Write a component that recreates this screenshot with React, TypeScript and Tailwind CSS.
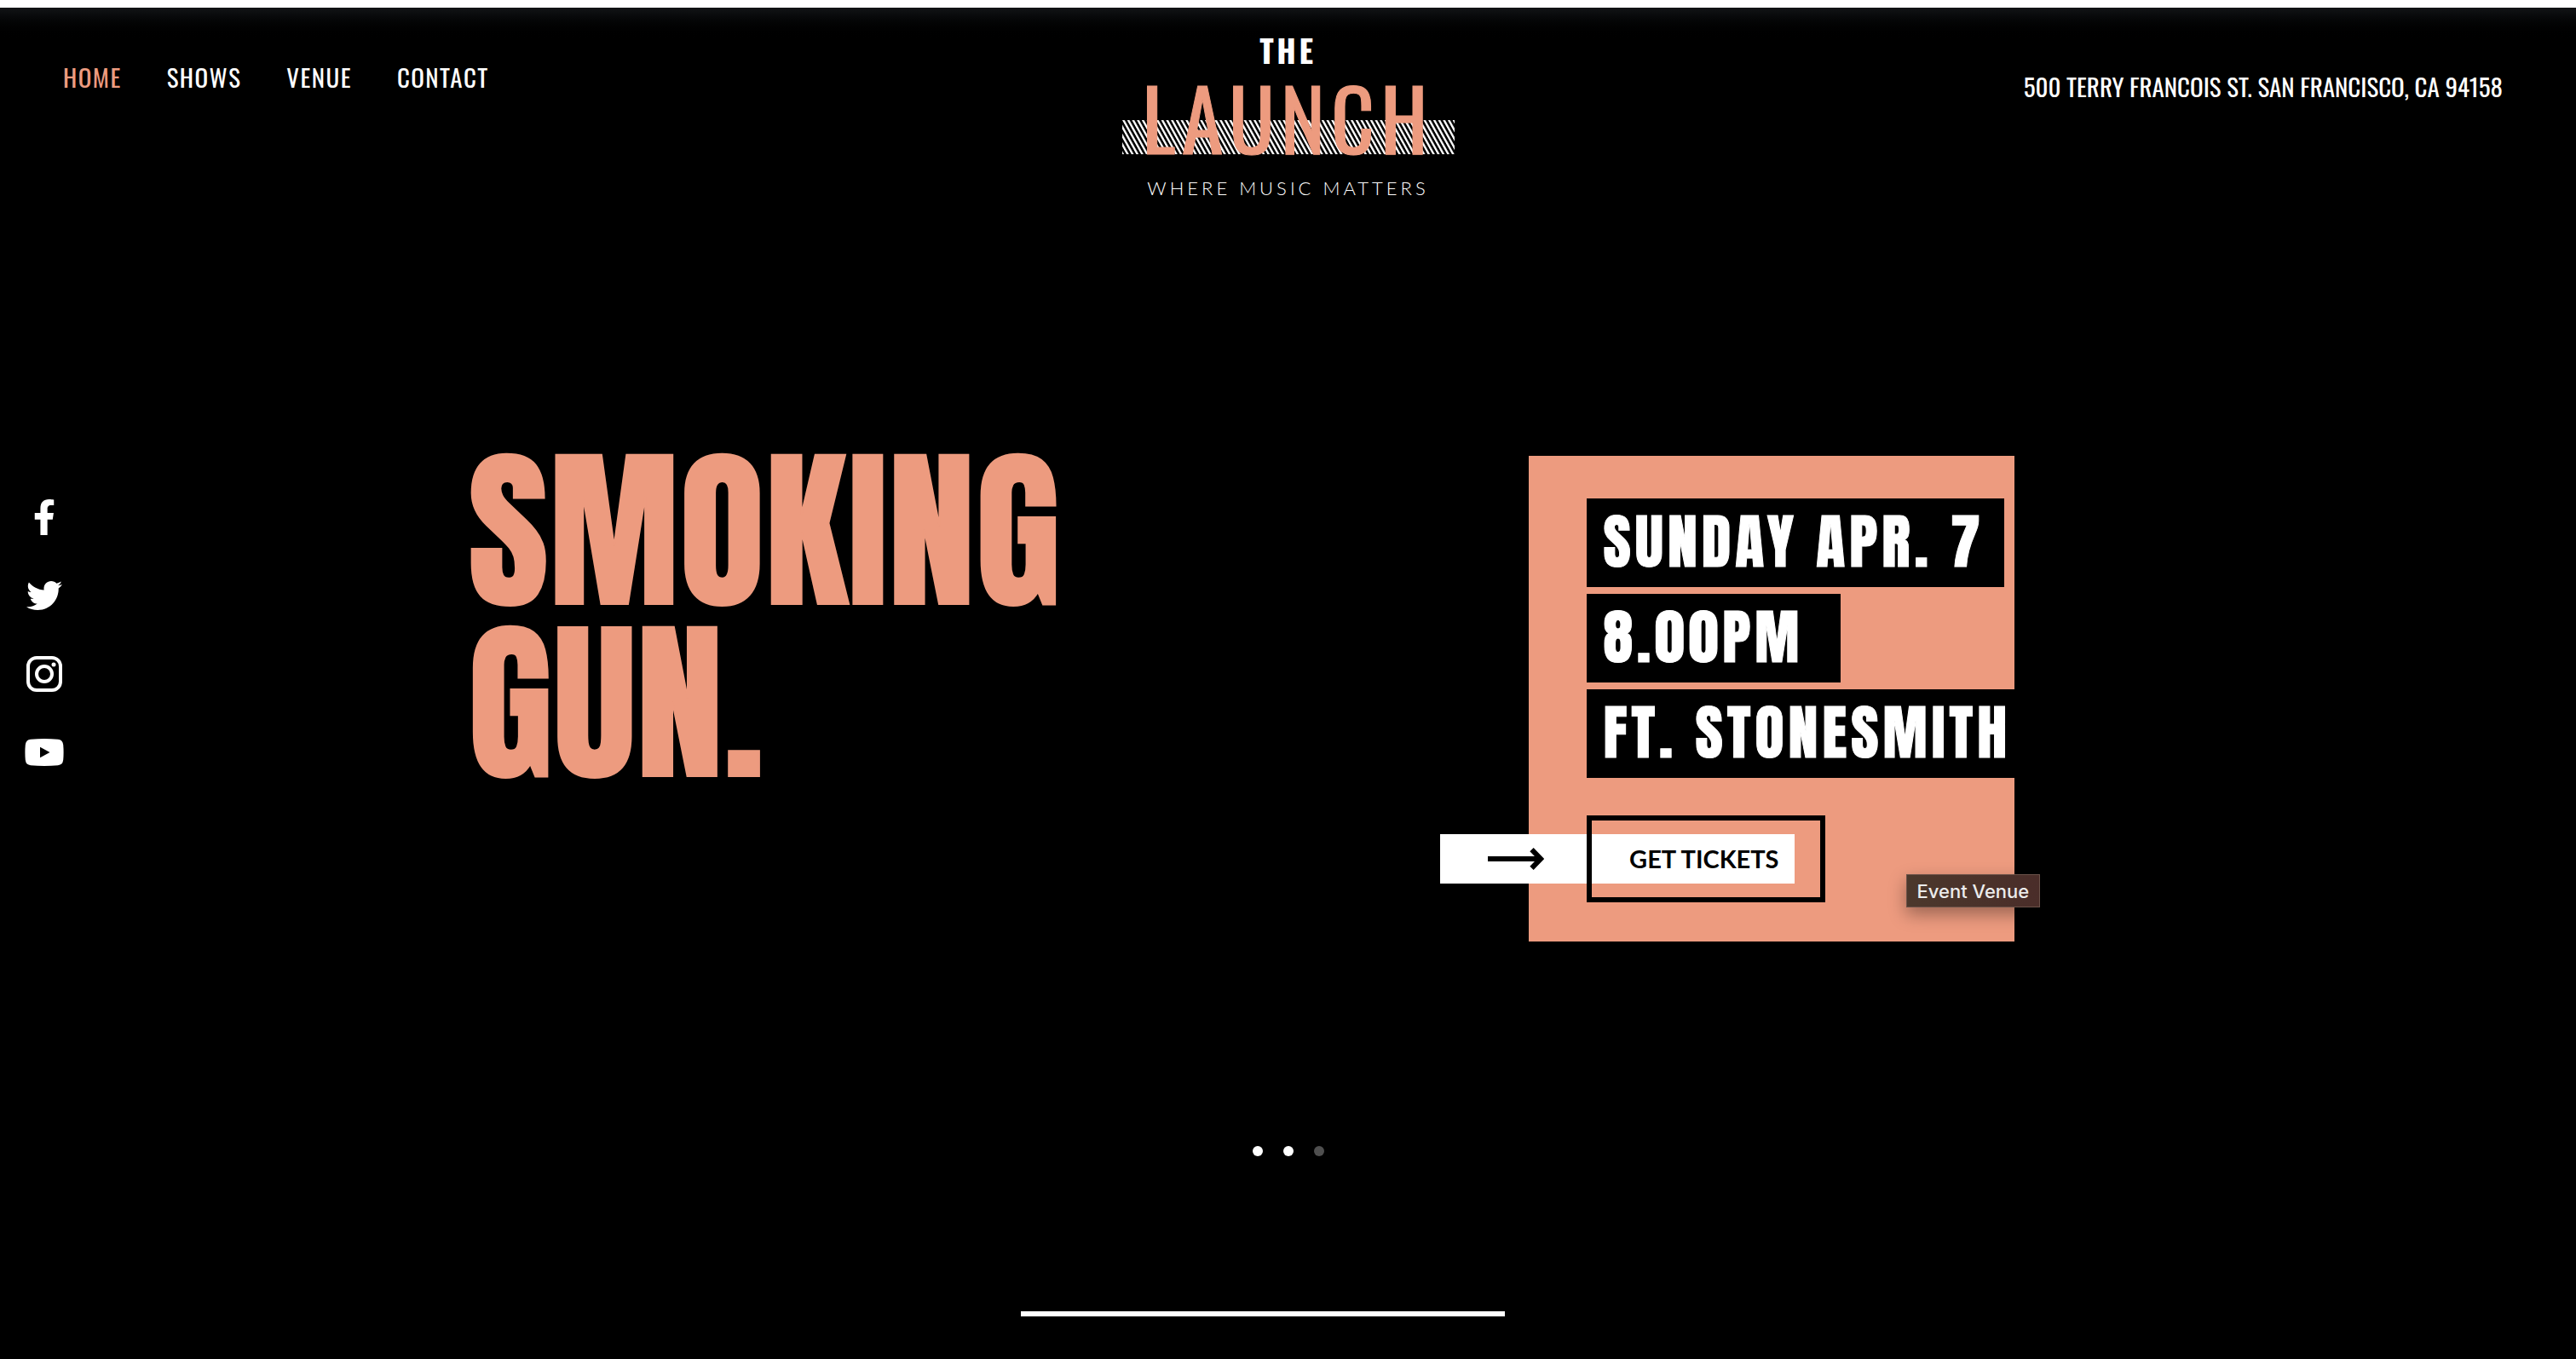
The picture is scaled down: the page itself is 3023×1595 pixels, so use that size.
import type { ReactNode } from "react";
import { FaFacebookF, FaTwitter } from "react-icons/fa";

const navItems = [
  { label: "HOME", href: "#home", active: true },
  { label: "SHOWS", href: "#shows", active: false },
  { label: "VENUE", href: "#venue", active: false },
  { label: "CONTACT", href: "#contact", active: false },
];

function InstagramIcon() {
  return (
    <svg viewBox="0 0 42 42" className="size-[42px]" fill="none" stroke="currentColor" strokeWidth="4" aria-hidden="true">
      <rect x="2" y="2" width="38" height="38" rx="10" />
      <circle cx="21" cy="21" r="9" />
      <circle cx="32" cy="10" r="2.5" fill="currentColor" stroke="none" />
    </svg>
  );
}

function YoutubeIcon() {
  return (
    <svg viewBox="0 0 46 32" className="h-8 w-[46px]" fill="currentColor" fillRule="evenodd" aria-hidden="true">
      <path d="M7 .8Q23-.6 39 .8Q44.500 1.300 45.200 7Q46 16 45.200 25Q44.500 30.700 39 31.200Q23 32.600 7 31.200Q1.500 30.700.8 25Q0 16 .8 7Q1.500 1.300 7 .8ZM18 9.700V22.300L29.500 16Z" />
    </svg>
  );
}

const socials: { label: string; icon: ReactNode }[] = [
  { label: "Facebook", icon: <FaFacebookF className="size-[42px]" /> },
  { label: "Twitter", icon: <FaTwitter className="size-[42px]" /> },
  { label: "Instagram", icon: <InstagramIcon /> },
  { label: "YouTube", icon: <YoutubeIcon /> },
];

function Stripes() {
  return (
    <svg className="absolute bottom-0 left-0 h-10 w-full" aria-hidden="true">
      <defs>
        <pattern id="stripes" width="5.700" height="40" patternUnits="userSpaceOnUse" patternTransform="skewX(29)">
          <rect width="2.700" height="40" fill="white" />
        </pattern>
      </defs>
      <rect width="100%" height="40" fill="url(#stripes)" />
    </svg>
  );
}

function Logo() {
  return (
    <a href="#home" className="flex w-[390px] flex-col items-center text-center">
      <span className="font-['Oswald','Roboto_Condensed',sans-serif] text-[37px] leading-[40px] font-bold tracking-widest">THE</span>
      <span className="relative mt-5 flex h-[82px] w-full items-start justify-center">
        <Stripes />
        <span className="relative font-['Oswald','Roboto_Condensed',sans-serif] text-[99px] leading-[76px] tracking-[7px] text-[#ed9b7f] [-webkit-text-stroke:1px_#ed9b7f]">
          LAUNCH
        </span>
      </span>
      <span className="mt-6 font-['Lato',sans-serif] text-[22px] leading-[32px] font-light tracking-[4px] whitespace-nowrap">
        WHERE MUSIC MATTERS
      </span>
    </a>
  );
}

function Arrow() {
  return (
    <svg viewBox="0 0 66 26" className="h-[26px] w-[66px]" fill="none" stroke="currentColor" strokeWidth="6" aria-hidden="true">
      <path d="M0 13H61M51.500 2.100 62 13 51.500 23.900" />
    </svg>
  );
}

function EventCard() {
  return (
    <section className="relative mt-[13px] h-[570px] w-[570px] shrink-0 bg-[#ed9b7f] pt-[50px] pl-[68px]" aria-label="Event details">
      <div className="flex flex-col items-start gap-2 font-['Anton','Oswald',sans-serif] text-[70px] leading-[102px] tracking-[5px] whitespace-nowrap [-webkit-text-stroke:1px_white]">
        <p className="w-[490px] bg-black pb-0.5 pl-5">SUNDAY APR. 7</p>
        <p className="w-[298px] bg-black pb-0.5 pl-5">8.00PM</p>
        <p className="w-[520px] bg-black pb-0.5 pl-5">FT. STONESMITH</p>
      </div>
      <a
        href="#tickets"
        className="relative mt-[66px] -ml-[172px] flex h-[58px] w-[416px] items-center justify-between bg-white pr-[18px] pl-14 text-black"
      >
        <Arrow />
        <span className="font-['Lato',sans-serif] text-[29px] leading-[32px] font-bold">GET TICKETS</span>
        <span className="absolute -top-[22px] left-[172px] h-[102px] w-[280px] border-6 border-black" />
      </a>
      <div
        role="tooltip"
        className="absolute top-[491px] left-[443px] flex h-[39px] items-center border border-[#6b5249] bg-linear-to-r from-[#4b382c] to-[#4a2d29] px-3 font-['Inter',sans-serif] text-[22px] leading-[24px] font-medium whitespace-nowrap text-[#ececec] shadow-[0_8px_20px_rgba(0,0,0,0.35)]"
      >
        Event Venue
      </div>
    </section>
  );
}

export default function App() {
  return (
    <div className="flex min-h-screen flex-col border-t-9 border-white bg-black text-white">
      <header className="grid grid-cols-[1fr_auto_1fr] items-start bg-linear-to-b from-[#121416] to-black to-[40px] px-[74px] pt-[30px]">
        <nav aria-label="Main" className="flex gap-[53px] pt-[29px] font-['Oswald','Roboto_Condensed',sans-serif] text-[29px] leading-[44px] tracking-wider">
          {navItems.map((item) => (
            <a
              key={item.label}
              href={item.href}
              aria-current={item.active ? "page" : undefined}
              className={item.active ? "text-[#ed9b7f]" : "text-white"}
            >
              {item.label}
            </a>
          ))}
        </nav>
        <Logo />
        <address className="pt-[40px] pr-3 text-right font-['Oswald','Roboto_Condensed',sans-serif] text-[29px] leading-[44px] not-italic">
          500 TERRY FRANCOIS ST. SAN FRANCISCO, CA 94158
        </address>
      </header>

      <main className="mt-[285px] flex flex-col">
        <div className="grid grid-cols-[104px_1fr_104px] items-start">
          <aside aria-label="Social links" className="flex flex-col pt-[39px]">
            {socials.map((social) => (
              <a key={social.label} href={`#${social.label.toLowerCase()}`} aria-label={social.label} className="flex h-[92px] items-center justify-center">
                {social.icon}
              </a>
            ))}
          </aside>
          <div className="mx-auto flex w-full max-w-[1960px] items-start justify-between pr-32 pl-[18px]">
            <h1 className="font-['Anton','Oswald',sans-serif] text-[204px] leading-[202px] tracking-[1px] text-[#ed9b7f] [-webkit-text-stroke:2px_#ed9b7f]">
              SMOKING
              <br />
              GUN.
            </h1>
            <EventCard />
          </div>
        </div>

        <div className="mt-[240px] flex justify-center gap-6" role="group" aria-label="Slides">
          <button type="button" aria-label="Slide 1" className="size-3 rounded-full bg-white" />
          <button type="button" aria-label="Slide 2" className="size-3 rounded-full bg-white" />
          <button type="button" aria-label="Slide 3" className="size-3 rounded-full bg-[#4f4f4f]" />
        </div>
        <div className="mt-[182px] flex justify-center pr-[60px]">
          <div className="h-[6px] w-[568px] bg-white" />
        </div>
      </main>
    </div>
  );
}
